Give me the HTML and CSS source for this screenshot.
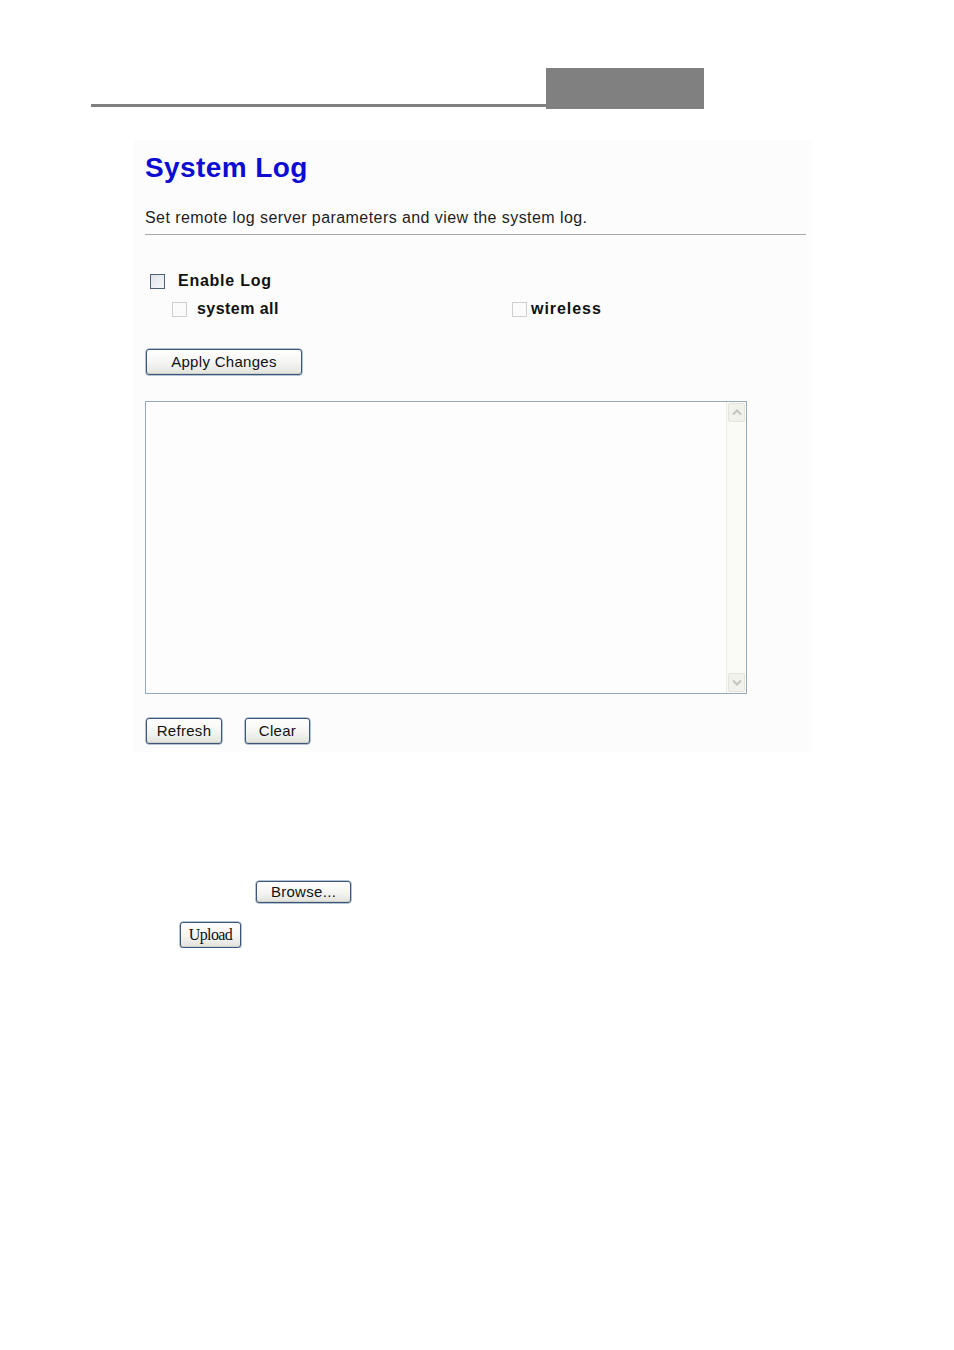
FILE: index.html
```html
<!DOCTYPE html>
<html lang="en">
<head>
<meta charset="utf-8">
<title>System Log</title>
<link rel="stylesheet" href="styles.css">
</head>
<body>
<div class="page">
  <div class="header">
    <div class="header-rule"></div>
    <div class="header-tab"></div>
  </div>

  <div class="panel">
    <h1 class="title">System Log</h1>
    <p class="subtitle">Set remote log server parameters and view the system log.</p>
    <div class="divider"></div>

    <div class="row row-main">
      <span class="cb cb-main"></span>
      <span class="label label-main">Enable Log</span>
    </div>
    <div class="row row-sub">
      <div class="opt opt-first">
        <span class="cb cb-sub"></span>
        <span class="label label-sys">system all</span>
      </div>
      <div class="opt opt-second">
        <span class="cb cb-sub"></span>
        <span class="label label-wl">wireless</span>
      </div>
    </div>

    <button class="btn btn-apply">Apply Changes</button>

    <div class="logbox">
      <div class="log-content"></div>
      <div class="scrollbar">
        <div class="sb-btn">
          <svg width="10" height="7" viewBox="0 0 10 7"><path d="M1 5.5 L5 1.5 L9 5.5" fill="none" stroke="#c4c4bc" stroke-width="2"/></svg>
        </div>
        <div class="sb-track"></div>
        <div class="sb-btn">
          <svg width="10" height="7" viewBox="0 0 10 7"><path d="M1 1.5 L5 5.5 L9 1.5" fill="none" stroke="#c4c4bc" stroke-width="2"/></svg>
        </div>
      </div>
    </div>

    <div class="actions">
      <button class="btn btn-refresh">Refresh</button>
      <button class="btn btn-clear">Clear</button>
    </div>
  </div>

  <div class="upload-area">
    <button class="btn btn-browse">Browse...</button>
    <button class="btn btn-upload">Upload</button>
  </div>
</div>
</body>
</html>
```

FILE: styles.css
```css
html, body {
  margin: 0;
  padding: 0;
  background: #ffffff;
}

body {
  font-family: "Liberation Sans", Arial, sans-serif;
  color: #1a1a1a;
}

.page {
  padding-top: 68px;
}

.header {
  display: flex;
  align-items: flex-end;
  margin-left: 91px;
}

.header-rule {
  width: 455px;
  height: 3px;
  margin-bottom: 2px;
  background: #808080;
}

.header-tab {
  width: 158px;
  height: 41px;
  background: #808080;
}

.panel {
  box-sizing: border-box;
  margin: 31px 0 0 134px;
  width: 678px;
  height: 612px;
  padding: 12px 0 0 11px;
  background: #fcfcfc;
}

.title {
  margin: 0;
  font-size: 28px;
  line-height: 32px;
  font-weight: bold;
  letter-spacing: 0.4px;
  color: #0c0cd2;
}

.subtitle {
  margin: 24px 0 0 0;
  font-size: 16px;
  line-height: 20px;
  letter-spacing: 0.43px;
  color: #1e1e1e;
}

.divider {
  margin-top: 6px;
  width: 661px;
  height: 1px;
  background: #a8a8a8;
}

.row {
  display: flex;
  align-items: center;
  height: 28px;
}

.row-main {
  margin-top: 32px;
  padding-left: 5px;
}

.row-sub {
  padding-left: 27px;
}

.opt {
  display: flex;
  align-items: center;
}

.opt-first {
  width: 340px;
}

.cb {
  box-sizing: border-box;
  display: inline-block;
  width: 15px;
  height: 15px;
  flex: none;
}

.cb-main {
  border: 1px solid #4e5f78;
  background: linear-gradient(135deg, #dfe3ea 0%, #f6f7f9 100%);
}

.cb-sub {
  border: 1px solid #cfcfcf;
  background: #fbfbfb;
}

.label {
  font-size: 16px;
  font-weight: bold;
  color: #111;
  letter-spacing: 0.75px;
}

.label-main {
  margin-left: 13px;
}

.label-sys {
  margin-left: 10px;
  letter-spacing: 0.45px;
}

.label-wl {
  margin-left: 4px;
  letter-spacing: 0.95px;
}

.btn {
  box-sizing: border-box;
  display: block;
  padding: 0;
  border: 1px solid #3a5678;
  border-radius: 3px;
  background: linear-gradient(#ffffff 0%, #f4f4f2 55%, #e2e2dc 100%);
  font-family: "Liberation Sans", Arial, sans-serif;
  font-size: 15px;
  color: #111;
  text-align: center;
  letter-spacing: 0.3px;
  box-shadow: inset 0 -1px 0 #d0d0c8, 0 0 0 0.5px #6f87a6;
}

.btn-apply {
  margin-top: 26px;
  margin-left: 1px;
  width: 156px;
  height: 26px;
  line-height: 24px;
}

.logbox {
  box-sizing: border-box;
  display: flex;
  margin-top: 26px;
  width: 602px;
  height: 293px;
  border: 1px solid #95a8bd;
  background: #fdfdfd;
}

.log-content {
  flex: 1;
}

.scrollbar {
  box-sizing: border-box;
  display: flex;
  flex-direction: column;
  width: 20px;
  padding: 1px;
  border-left: 1px solid #ecece6;
  background: #fafaf6;
}

.sb-btn {
  box-sizing: border-box;
  display: flex;
  align-items: center;
  justify-content: center;
  height: 19px;
  border: 1px solid #e4e4dc;
  border-radius: 2px;
  background: #f2f2ec;
}

.sb-track {
  flex: 1;
}

.actions {
  display: flex;
  gap: 23px;
  margin-top: 24px;
  margin-left: 1px;
}

.btn-refresh {
  width: 76px;
  height: 26px;
  line-height: 24px;
}

.btn-clear {
  width: 65px;
  height: 26px;
  line-height: 24px;
}

.upload-area {
  margin-top: 129px;
}

.btn-browse {
  margin-left: 256px;
  width: 95px;
  height: 22px;
  line-height: 20px;
  font-size: 15px;
}

.btn-upload {
  margin-top: 19px;
  margin-left: 180px;
  width: 61px;
  height: 26px;
  line-height: 20px;
  font-family: "Liberation Serif", "Times New Roman", serif;
  font-size: 16px;
  letter-spacing: -0.6px;
}
```
